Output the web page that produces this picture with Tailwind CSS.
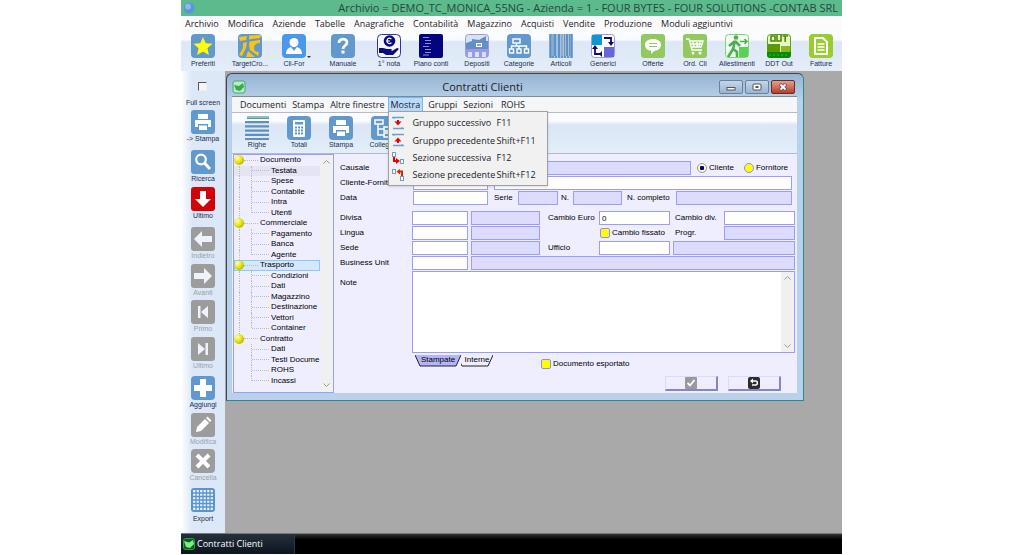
<!DOCTYPE html>
<html lang="it">
<head>
    <meta charset="UTF-8">
    <meta name="viewport" content="width=device-width, initial-scale=1.0">
    <title>Contratti Clienti</title>
    <script src="https://cdn.jsdelivr.net/npm/@tailwindcss/browser@4"></script>
</head>

<body class="bg-white">
<div class="flex min-h-screen flex-col pr-[182px] pb-px pl-[181px] font-['Open_Sans','Noto_Sans',sans-serif] text-[9px] leading-3 text-[#1b1b2b]">

    <!-- Title bar -->
    <header class="flex h-4 items-center bg-[#5cba8c] pr-1 pl-0.5">
        <svg class="size-3 shrink-0" viewBox="0 0 12 12"><circle cx="6" cy="6" r="5.500" fill="#5b93dc"/><circle cx="5" cy="4.500" r="3" fill="#8db8ee"/></svg>
        <h1 class="flex-1 text-right text-[11px] leading-4 whitespace-nowrap text-[#24493c]">Archivio = DEMO_TC_MONICA_55NG - Azienda = 1 - FOUR BYTES - FOUR SOLUTIONS -CONTAB SRL</h1>
    </header>

    <!-- Main menu -->
    <nav class="flex h-4 items-center gap-[9px] bg-[#fbfbfb] pl-1 whitespace-nowrap">
        <a href="#">Archivio</a>
        <a href="#">Modifica</a>
        <a href="#">Aziende</a>
        <a href="#">Tabelle</a>
        <a href="#">Anagrafiche</a>
        <a href="#">Contabilità</a>
        <a href="#">Magazzino</a>
        <a href="#">Acquisti</a>
        <a href="#">Vendite</a>
        <a href="#">Produzione</a>
        <a href="#">Moduli aggiuntivi</a>
    </nav>

    <!-- Main toolbar -->
    <div class="flex h-[39px] bg-linear-to-b from-[#fafcff] from-20% via-[#dde7f5] via-25% to-[#e3eefa] pt-0.5 pl-px font-['Liberation_Sans',sans-serif] text-[7px] leading-[11px] whitespace-nowrap text-[#1c2c50]">
        <button class="mr-[5px] flex w-[42px] flex-col items-center">
            <svg class="size-6" viewBox="0 0 24 24"><rect width="24" height="24" rx="4" fill="#6199cf"/><path d="M12 3l2.700 6.200 6.800.6-5.100 4.500 1.500 6.700-5.900-3.500L6.100 21l1.500-6.700-5.100-4.500 6.800-.6z" fill="#ff0"/></svg>
            Preferiti
        </button>
        <button class="mr-0.5 flex w-[42px] flex-col items-center">
            <svg class="size-6" viewBox="0 0 24 24"><rect width="24" height="24" rx="4" fill="#6199cf"/><path d="M1 3l8-1-1 4-6 1zM11 1.500L23 1l-1 3-11 1.500zM5 9l4-1-1 6-4 8-3-1 4-7zM11.500 7.500L22 6v3c-4 0-6 2-6 5s2 4 5 4l-1 4-8-6c-1-3-1-5-.5-8.500zM10 17l7 6H8z" fill="#fcc40c"/></svg>
            TargetCro...
        </button>
        <button class="relative mr-[7px] flex w-[42px] flex-col items-center">
            <svg class="size-6" viewBox="0 0 24 24"><rect width="24" height="24" rx="4" fill="#4a97ee"/><circle cx="12" cy="8.500" r="4.500" fill="#fff"/><path d="M4 20c0-4 2-6 5-7l3 4 3-4c3 1 5 3 5 7z" fill="#fff"/></svg>
            Cli-For
            <svg class="absolute top-[21px] right-1 h-1 w-1" viewBox="0 0 4 4"><path d="M0 1h4L2 3z" fill="#234"/></svg>
        </button>
        <button class="mr-1 flex w-[42px] flex-col items-center">
            <svg class="size-6" viewBox="0 0 24 24"><rect width="24" height="24" rx="4" fill="#6199cf"/><path d="M8 9c0-5 8-5 8-.5 0 3-4 3-4 6.500" fill="none" stroke="#fff" stroke-width="2.800"/><rect x="10.500" y="16.500" width="3" height="3" fill="#fff"/></svg>
            Manuale
        </button>
        <button class="flex w-[42px] flex-col items-center">
            <svg class="size-6" viewBox="0 0 24 24"><rect x=".5" y=".5" width="23" height="23" rx="4" fill="#f4f6ff" stroke="#34349a"/><circle cx="12.500" cy="7" r="5.800" fill="#0a0a80"/><path d="M14.500 5c-3-2-4.500 0-4.500 2s2 3.500 4.500 1.800M9 7h4" fill="none" stroke="#fff" stroke-width="1.200"/><path d="M2 14h4l4 1h4c1 0 1 2 0 2h-4 5l5-3c2 0 2 1 1 2l-5 5H9l-3-2H2z" fill="#0a0a80"/></svg>
            1° nota
        </button>
        <button class="mr-1 flex w-[42px] flex-col items-center">
            <svg class="size-6" viewBox="0 0 24 24"><rect width="24" height="24" rx="2" fill="#04047e"/><path d="M4 3.500h6M6 6.500h6M6 9.500h6M4 12.500h6M6 15.500h6M6 18.500h6M4 21h6" stroke="#8f8fce" stroke-width="1.200"/></svg>
            Piano conti
        </button>
        <button class="flex w-[42px] flex-col items-center">
            <svg class="size-6" viewBox="0 0 24 24"><rect x=".5" y=".5" width="23" height="23" rx="3" fill="#d8e2f8" stroke="#9a9ae4"/><path d="M1 9l6-2V5l7 1 7-4v5h2v8H1z" fill="#6090c6"/><rect x="1" y="15" width="22" height="8" fill="#9a9ae8"/><path d="M3 23v-5h4v5zM10 23v-5h4v5zM17 23v-5h4v5z" fill="#d8e2f8"/><rect x="11.500" y="9.500" width="5" height="3" fill="#9a9ae8" stroke="#fff"/></svg>
            Depositi
        </button>
        <button class="flex w-[42px] flex-col items-center">
            <svg class="size-6" viewBox="0 0 24 24"><rect width="24" height="24" rx="4" fill="#6199cf"/><g fill="none" stroke="#fff" stroke-width="1.400"><rect x="6" y="5" width="7" height="4"/><path d="M9.500 9v3M4.500 15v-3h15v3M12 12v3"/><rect x="2.500" y="15" width="4" height="4"/><rect x="10" y="15" width="4" height="4"/><rect x="17.500" y="15" width="4" height="4"/></g></svg>
            Categorie
        </button>
        <button class="flex w-[42px] flex-col items-center">
            <svg class="size-6" viewBox="0 0 24 24"><rect width="24" height="24" rx="1" fill="#a9c6e6"/><path d="M1.500 0v24M6 0v22M10 0v22M18 0v22M22.500 0v24" stroke="#5a92cc" stroke-width="2.200"/><path d="M4 0v22M13 0v22M15.500 0v22M20.500 0v22" stroke="#7e8fa2" stroke-width="1"/><path d="M3 23h18" stroke="#6199cf" stroke-width="2" stroke-dasharray="2 1"/></svg>
            Articoli
        </button>
        <button class="mr-2 flex w-[42px] flex-col items-center">
            <svg class="size-6" viewBox="0 0 24 24"><rect x=".5" y=".5" width="23" height="23" rx="3" fill="#fff" stroke="#9a9ae4"/><rect x="1" y="1" width="10" height="10" fill="#0c98d0"/><rect x="13" y="13" width="10" height="10" fill="#6666d4"/><path d="M13 4h7v6M11 20H4v-6" fill="none" stroke="#0a0a70" stroke-width="1.800"/><path d="M17 8h6l-3 4zM1 15h6l-3-4zM11 17v6l-3-3z" fill="#0a0a70"/></svg>
            Generici
        </button>
        <button class="flex w-[42px] flex-col items-center">
            <svg class="size-6" viewBox="0 0 24 24"><rect width="24" height="24" rx="3" fill="#92c85e"/><path d="M12 5c5 0 8 2.500 8 6s-3 5.500-6 5.500L10 20v-3.500c-4 0-6-2.500-6-5.500 0-3.500 3-6 8-6z" fill="#fff"/><path d="M8 9.500h8M8 12.500h8" stroke="#92c85e" stroke-width="1.200"/></svg>
            Offerte
        </button>
        <button class="flex w-[42px] flex-col items-center">
            <svg class="size-6" viewBox="0 0 24 24"><rect width="24" height="24" rx="3" fill="#92c85e"/><g fill="none" stroke="#fff" stroke-width="1.400"><path d="M3 5h3l3 11h10M7 7h13l-2 6H9M10 8l1 5M14 8v5M17 8l-1 5M8 10h11"/></g><circle cx="10" cy="19" r="1.500" fill="#fff"/><circle cx="17" cy="19" r="1.500" fill="#fff"/></svg>
            Ord. Cli
        </button>
        <button class="flex w-[42px] flex-col items-center">
            <svg class="size-6" viewBox="0 0 24 24"><rect x=".5" y=".5" width="23" height="23" rx="3" fill="#f2fff0" stroke="#7cd66e"/><circle cx="11" cy="3.500" r="2.300" fill="#4cae50"/><path d="M10 7l-2 8 4 3v5M8 15l-5 8M10 7l5 5M10 7l-6 5" fill="none" stroke="#4cae50" stroke-width="2.600"/><rect x="14" y="13" width="9" height="10" fill="#5cd058"/><path d="M15 7.500h7M19.500 5l2.500 2.500-2.500 2.500" fill="none" stroke="#4cae50" stroke-width="1.500"/></svg>
            Allestimenti
        </button>
        <button class="flex w-[42px] flex-col items-center">
            <svg class="size-6" viewBox="0 0 24 24"><rect x=".5" y=".5" width="23" height="23" rx="3" fill="#eaf6c8" stroke="#5ea010"/><path d="M4 2h4v5H4zM10 1v6h4V1M15.500 2H21M18.200 2v6" fill="none" stroke="#4a8c00" stroke-width="1.600"/><rect x="1" y="10" width="12" height="9" fill="#5c9a00"/><rect x="14" y="12" width="9" height="7" fill="#86ba20"/><path d="M0 18h24v3a3 3 0 0 1-3 3H3a3 3 0 0 1-3-3z" fill="#078a07"/><path d="M2 21h20" stroke="#3cb83c" stroke-dasharray="2 2"/></svg>
            DDT Out
        </button>
        <button class="flex w-[42px] flex-col items-center">
            <svg class="size-6" viewBox="0 0 24 24"><rect width="24" height="24" rx="4" fill="#9acb31"/><path d="M6 4h8l4 4v12H6z" fill="none" stroke="#fff" stroke-width="2"/><path d="M8.500 10h7M8.500 13h7M8.500 16h7" stroke="#fff" stroke-width="1.400"/></svg>
            Fatture
        </button>
    </div>

    <div class="flex flex-1">

        <!-- Side toolbar -->
        <aside class="flex w-11 shrink-0 flex-col items-center bg-linear-to-r from-white to-[#dce8f8] to-25% pt-[11px] font-['Liberation_Sans',sans-serif] text-[7px] leading-[9px] whitespace-nowrap text-[#1c2c50]">
            <label class="mb-[3px] flex flex-col items-center gap-[7px]">
                <input type="checkbox" class="size-[9px] appearance-none border border-[#eee] border-t-[#555] border-l-[#555] bg-[#f4f4f4]">
                Full screen
            </label>
            <button class="mb-[7px] flex flex-col items-center">
                <svg class="size-6" viewBox="0 0 24 24"><rect width="24" height="24" rx="3" fill="#6199cf"/><path d="M7 4h10v5H7zM4 10h16v7h-3v-3H7v3H4zM8 15.500h8V20H8z" fill="#fff"/></svg>
                -&gt; Stampa
            </button>
            <button class="mb-1 flex flex-col items-center">
                <svg class="size-6" viewBox="0 0 24 24"><rect width="24" height="24" rx="3" fill="#6199cf"/><circle cx="10" cy="9.500" r="4.800" fill="none" stroke="#fff" stroke-width="2.200"/><path d="M13.500 13l5.500 6" stroke="#fff" stroke-width="3"/></svg>
                Ricerca
            </button>
            <button class="mb-[7px] flex flex-col items-center">
                <svg class="size-6" viewBox="0 0 24 24"><rect width="24" height="24" rx="3" fill="#d20408"/><path d="M9 4h6v8h5l-8 8-8-8h5z" fill="#fff"/></svg>
                Ultimo
            </button>
            <button class="mb-1 flex flex-col items-center text-[#9a9fa8]" disabled>
                <svg class="size-6" viewBox="0 0 24 24"><rect width="24" height="24" rx="3" fill="#9c9c9c"/><path d="M3 12l8-8v5h10v6H11v5z" fill="#eef2fa"/></svg>
                Indietro
            </button>
            <button class="mb-[3px] flex flex-col items-center text-[#9a9fa8]" disabled>
                <svg class="size-6" viewBox="0 0 24 24"><rect width="24" height="24" rx="3" fill="#9c9c9c"/><path d="M21 12l-8-8v5H3v6h10v5z" fill="#eef2fa"/></svg>
                Avanti
            </button>
            <button class="mb-1 flex flex-col items-center text-[#9a9fa8]" disabled>
                <svg class="size-6" viewBox="0 0 24 24"><rect width="24" height="24" rx="3" fill="#9c9c9c"/><path d="M7 6h2.500v12H7zM17 6v12l-7-6z" fill="#eef2fa"/></svg>
                Primo
            </button>
            <button class="mb-1.5 flex flex-col items-center text-[#9a9fa8]" disabled>
                <svg class="size-6" viewBox="0 0 24 24"><rect width="24" height="24" rx="3" fill="#9c9c9c"/><path d="M14.500 6H17v12h-2.500zM7 6v12l7-6z" fill="#eef2fa"/></svg>
                Ultimo
            </button>
            <button class="mb-1 flex flex-col items-center">
                <svg class="size-6" viewBox="0 0 24 24"><rect width="24" height="24" rx="4" fill="#6199cf"/><path d="M9 3h6v6h6v6h-6v6H9v-6H3V9h6z" fill="#fff"/></svg>
                Aggiungi
            </button>
            <button class="mb-[3px] flex flex-col items-center text-[#9a9fa8]" disabled>
                <svg class="size-6" viewBox="0 0 24 24"><rect width="24" height="24" rx="3" fill="#9c9c9c"/><path d="M5 19l1-5 8-8 4 4-8 8zM15 5l1.500-1.500 4 4L19 9z" fill="#fff"/></svg>
                Modifica
            </button>
            <button class="mb-1.5 flex flex-col items-center text-[#9a9fa8]" disabled>
                <svg class="size-6" viewBox="0 0 24 24"><rect width="24" height="24" rx="4" fill="#9c9c9c"/><path d="M6 6l12 12M18 6L6 18" stroke="#fff" stroke-width="4"/></svg>
                Cancella
            </button>
            <button class="flex flex-col items-center gap-0.5">
                <svg class="size-6" viewBox="0 0 24 24"><rect x="1" y="1" width="22" height="22" rx="2" fill="#eaf3fc" stroke="#5b95d0" stroke-width="2"/><path d="M5 1v22M8.500 1v22M12 1v22M15.500 1v22M19 1v22M1 5h22M1 8.500h22M1 12h22M1 15.500h22M1 19h22" stroke="#5b95d0" stroke-width="1.300"/></svg>
                Export
            </button>
        </aside>

        <!-- Workspace -->
        <main class="min-w-0 flex-1 bg-[#a9a9a9] pt-0.5 pr-[38px] pl-px">
            <section class="rounded-t-md border border-[#3c4650] border-r-[#1d8d9c] border-b-[#1d8d9c] bg-linear-to-b from-[#98b4d2] to-[#b9d1ea] to-8% pr-1.5 pb-[7px] pl-[5px]">

                <div class="flex h-[22px] items-center pt-1">
                    <svg class="size-3.5" viewBox="0 0 14 14"><rect x="1" y="1" width="12" height="12" rx="2" fill="#bfe8c8" stroke="#3fae62"/><path d="M2 5l5 1 4-3 1 4-4 4-4-1z" fill="#2fb04c"/></svg>
                    <h2 class="flex-1 text-center text-[11px] leading-4">Contratti Clienti</h2>
                    <div class="flex gap-0.5 pr-0.5">
                        <button class="flex h-3.5 w-6 items-center justify-center rounded-xs border border-[#6c8099] bg-linear-to-b from-[#c4d6ea] to-[#9ab4d2]" aria-label="Riduci a icona"><svg class="h-2 w-2.5" viewBox="0 0 10 8"><rect x="1" y="4.500" width="8" height="2.500" fill="#fff" stroke="#555"/></svg></button>
                        <button class="flex h-3.5 w-6 items-center justify-center rounded-xs border border-[#6c8099] bg-linear-to-b from-[#c4d6ea] to-[#9ab4d2]" aria-label="Ingrandisci"><svg class="h-2 w-2.5" viewBox="0 0 10 8"><rect x="1" y="1" width="8" height="6" rx="1" fill="#fff" stroke="#555"/><rect x="3.500" y="3" width="3" height="2" fill="#555"/></svg></button>
                        <button class="flex h-3.5 w-6 items-center justify-center rounded-xs border border-[#6d2a22] bg-linear-to-b from-[#e0a090] to-[#bc3a20]" aria-label="Chiudi"><svg class="h-2 w-2.5" viewBox="0 0 10 8"><path d="M2 1l6 6M8 1L2 7" stroke="#555" stroke-width="3.200"/><path d="M2.500 1.500l5 5M7.500 1.500l-5 5" stroke="#fff" stroke-width="1.800"/></svg></button>
                    </div>
                </div>

                <!-- Window menu -->
                <nav class="flex h-4 items-stretch border-t border-[#7d8a98] bg-[#f5f6f8] pl-[5px] leading-[15px] whitespace-nowrap">
                    <a href="#" class="px-[3px]">Documenti</a>
                    <a href="#" class="px-[3px]">Stampa</a>
                    <a href="#" class="px-[3px]">Altre finestre</a>
                    <div class="relative">
                        <a href="#" class="block border border-[#7eb4ea] bg-[#b9dbfb] px-0.5 leading-[13px]">Mostra</a>
                        <ul class="absolute top-[14px] left-0 z-10 w-40 border border-[#a0a0a0] bg-[#f1f1f1] py-0.5 shadow-sm">
                            <li><button class="flex h-[17px] w-full items-center pl-0.5 text-left">
                                <svg class="mr-2 size-3.5" viewBox="0 0 14 14"><path d="M1 1.500h12M2 12.500h11" stroke="#6fa0c8" stroke-width="1.400"/><path d="M3 1v2M11 11v2" stroke="#6fa0c8"/><path d="M6 4h2v1.500h2.500L7 9.500 3.500 5.500H6z" fill="#e80000"/></svg>
                                <span class="w-[84px]">Gruppo successivo</span><span>F11</span>
                            </button></li>
                            <li><button class="flex h-[18px] w-full items-center pl-0.5 text-left">
                                <svg class="mr-2 size-3.5" viewBox="0 0 14 14"><path d="M1 1.500h12M2 12.500h11" stroke="#6fa0c8" stroke-width="1.400"/><path d="M3 1v2M11 11v2" stroke="#6fa0c8"/><path d="M6 10h2V8.500h2.500L7 4.500 3.500 8.500H6z" fill="#e80000"/></svg>
                                <span class="w-[84px]">Gruppo precedente</span><span>Shift+F11</span>
                            </button></li>
                            <li><button class="flex h-[17px] w-full items-center pl-0.5 text-left">
                                <svg class="mr-2 size-3.5" viewBox="0 0 14 14"><rect x="1.500" y="1.500" width="3" height="4" fill="#fff" stroke="#6fa0c8"/><rect x="9.500" y="8.500" width="3" height="4" fill="#fff" stroke="#6fa0c8"/><path d="M3 6v4h3" fill="none" stroke="#e00" stroke-width="2"/><path d="M5 7l4 3-4 3z" fill="#e00"/></svg>
                                <span class="w-[84px]">Sezione successiva</span><span>F12</span>
                            </button></li>
                            <li><button class="flex h-[17px] w-full items-center pl-0.5 text-left">
                                <svg class="mr-2 size-3.5" viewBox="0 0 14 14"><rect x="1.500" y="1.500" width="3" height="4" fill="#fff" stroke="#6fa0c8"/><rect x="9.500" y="8.500" width="3" height="4" fill="#fff" stroke="#6fa0c8"/><path d="M11 8V3.500H8" fill="none" stroke="#d02a00" stroke-width="2"/><path d="M9 1L5.500 3.500 9 6.500z" fill="#d02a00"/></svg>
                                <span class="w-[84px]">Sezione precedente</span><span>Shift+F12</span>
                            </button></li>
                        </ul>
                    </div>
                    <a href="#" class="pr-[3px] pl-[5px]">Gruppi</a>
                    <a href="#" class="px-[3px]">Sezioni</a>
                    <a href="#" class="px-[5px]">ROHS</a>
                </nav>

                <!-- Window toolbar -->
                <div class="flex h-[41px] border-t border-[#b5bac4] bg-linear-to-b from-[#fafcff] from-20% via-[#dce6f5] via-30% to-[#e2eefa] pt-[3px] pl-1 font-['Liberation_Sans',sans-serif] text-[7px] leading-[10px] text-[#1c2c50]">
                    <button class="flex w-[42px] flex-col items-center">
                        <svg class="size-6" viewBox="0 0 24 24"><path d="M2 2h22M0 6.200h24M0 10.400h24M0 14.600h24M0 18.800h24M0 23h24" stroke="#5f8fc0" stroke-width="2.200"/><path d="M2 1h22" stroke="#8cc4b8" stroke-width="2"/></svg>
                        Righe
                    </button>
                    <button class="flex w-[42px] flex-col items-center">
                        <svg class="size-6" viewBox="0 0 24 24"><rect width="24" height="24" rx="4" fill="#6199cf"/><rect x="6" y="4" width="12" height="17" rx="1" fill="#fff"/><rect x="8" y="6" width="8" height="2.500" fill="#6199cf"/><path d="M8 11.500h8M8 14.500h8M8 17.500h8" stroke="#6199cf" stroke-width="1.800" stroke-dasharray="2 1"/></svg>
                        Totali
                    </button>
                    <button class="flex w-[42px] flex-col items-center">
                        <svg class="size-6" viewBox="0 0 24 24"><rect width="24" height="24" rx="4" fill="#6199cf"/><path d="M7 4h10v5H7zM4 10h16v7h-3v-3H7v3H4zM8 15.500h8V20H8z" fill="#fff"/></svg>
                        Stampa
                    </button>
                    <button class="flex w-[42px] flex-col items-center">
                        <svg class="size-6" viewBox="0 0 24 24"><rect width="24" height="24" rx="4" fill="#6199cf"/><g fill="none" stroke="#fff" stroke-width="1.500"><rect x="4" y="4" width="8" height="4"/><path d="M7 8v11h6M7 13h6"/><rect x="13" y="11" width="6" height="4"/><rect x="13" y="17" width="6" height="4"/></g></svg>
                        Collegati
                    </button>
                </div>

                <div class="flex border-t border-[#b5bac4] bg-[#efeeff] pl-px font-['Liberation_Sans',sans-serif] text-[8px] leading-[10px] text-black">

                    <!-- Section tree -->
                    <div class="flex h-[239px] w-[101px] shrink-0 border border-[#9c9cff]">
                        <ul id="tree" class="grid h-[231px] min-w-0 flex-1 auto-rows-fr whitespace-nowrap"></ul>
                        <div class="flex w-[13px] flex-col items-center justify-between bg-[#f0f0f0] py-[5px]">
                            <svg class="h-1 w-[7px]" viewBox="0 0 7 4"><path d="M.5 3.500l3-3 3 3" fill="none" stroke="#999"/></svg>
                            <svg class="h-1 w-[7px]" viewBox="0 0 7 4"><path d="M.5.500l3 3 3-3" fill="none" stroke="#999"/></svg>
                        </div>
                    </div>

                    <!-- Contract form -->
                    <form class="flex min-w-0 flex-1 flex-col pt-[7px] pr-0.5 pl-1.5 whitespace-nowrap">
                        <div class="flex flex-col gap-px pr-[3px]">
                            <div class="flex h-3.5 items-center">
                                <label for="causale" class="w-[73px]">Causale</label>
                                <input id="causale" class="h-3.5 min-w-0 flex-1 border border-[#9c9cff] bg-[#dcdcff]">
                                <label class="ml-1.5 flex items-center gap-0.5"><input type="radio" name="tipo" checked class="size-[10px] appearance-none rounded-full border border-[#8c8cff] bg-[#ffff80] checked:bg-[radial-gradient(circle,#000080_35%,#ffffa0_45%)]">Cliente</label>
                                <label class="mr-1 ml-2.5 flex items-center gap-0.5"><input type="radio" name="tipo" class="size-[10px] appearance-none rounded-full border border-[#8c8cff] bg-[#ffff00] checked:bg-[#000080]">Fornitore</label>
                            </div>
                            <div class="flex h-3.5 items-center">
                                <label for="cliente" class="w-[73px]">Cliente-Fornitore</label>
                                <input id="cliente" class="mr-1.5 h-3.5 w-[75px] border border-[#9c9cff] bg-white">
                                <input aria-label="Descrizione cliente" class="h-3.5 min-w-0 flex-1 border border-[#9c9cff] bg-white">
                            </div>
                            <div class="flex h-3.5 items-center">
                                <label for="data" class="w-[73px]">Data</label>
                                <input id="data" class="mr-1.5 h-3.5 w-[75px] border border-[#9c9cff] bg-white">
                                <label for="serie" class="w-6">Serie</label>
                                <input id="serie" class="h-3.5 w-10 border border-[#9c9cff] bg-[#dcdcff]">
                                <label for="numero" class="w-[15px] pl-[3px]">N.</label>
                                <input id="numero" class="h-3.5 w-[49px] border border-[#9c9cff] bg-[#dcdcff]">
                                <label for="completo" class="w-[54px] pl-[5px]">N. completo</label>
                                <input id="completo" class="h-3.5 min-w-0 flex-1 border border-[#9c9cff] bg-[#dcdcff]">
                            </div>
                        </div>

                        <div class="mt-1.5 flex flex-col gap-px">
                            <div class="flex h-3.5 items-center">
                                <label for="divisa" class="w-[72px]">Divisa</label>
                                <input id="divisa" class="mr-[3px] h-3.5 w-14 border border-[#9c9cff] bg-white">
                                <input aria-label="Descrizione divisa" class="h-3.5 w-[69px] border border-[#9c9cff] bg-[#dcdcff]">
                                <label for="euro" class="w-[59px] pl-2">Cambio Euro</label>
                                <input id="euro" value="0" class="h-3.5 w-[71px] border border-[#9c9cff] bg-white px-0.5">
                                <label for="cambio" class="w-[54px] pl-[5px]">Cambio div.</label>
                                <input id="cambio" class="h-3.5 min-w-0 flex-1 border border-[#9c9cff] bg-white">
                            </div>
                            <div class="flex h-3.5 items-center">
                                <label for="lingua" class="w-[72px]">Lingua</label>
                                <input id="lingua" class="mr-[3px] h-3.5 w-14 border border-[#9c9cff] bg-white">
                                <input aria-label="Descrizione lingua" class="h-3.5 w-[69px] border border-[#9c9cff] bg-[#dcdcff]">
                                <label class="ml-[60px] flex w-[65px] items-center gap-0.5 overflow-hidden"><input type="checkbox" class="size-[10px] shrink-0 appearance-none rounded-xs border border-[#8c8cff] bg-[#ffff00] checked:bg-[#000080]">Cambio fissato</label>
                                <label for="progr" class="ml-[5px] w-[54px] pl-[5px]">Progr.</label>
                                <input id="progr" class="h-3.5 min-w-0 flex-1 border border-[#9c9cff] bg-[#dcdcff]">
                            </div>
                            <div class="flex h-3.5 items-center">
                                <label for="sede" class="w-[72px]">Sede</label>
                                <input id="sede" class="mr-[3px] h-3.5 w-14 border border-[#9c9cff] bg-white">
                                <input aria-label="Descrizione sede" class="h-3.5 w-[69px] border border-[#9c9cff] bg-[#dcdcff]">
                                <label for="ufficio" class="w-[59px] pl-2">Ufficio</label>
                                <input id="ufficio" class="mr-[3px] h-3.5 w-[71px] border border-[#9c9cff] bg-white">
                                <input aria-label="Descrizione ufficio" class="h-3.5 min-w-0 flex-1 border border-[#9c9cff] bg-[#dcdcff]">
                            </div>
                            <div class="flex h-3.5 items-center">
                                <label for="unit" class="w-[72px]">Business Unit</label>
                                <input id="unit" class="mr-[3px] h-3.5 w-14 border border-[#9c9cff] bg-white">
                                <input aria-label="Descrizione business unit" class="h-3.5 min-w-0 flex-1 border border-[#9c9cff] bg-[#dcdcff]">
                            </div>
                            <div class="flex">
                                <label for="note" class="w-[72px] pt-[7px]">Note</label>
                                <div class="flex h-[82px] min-w-0 flex-1 border border-[#9c9cff] bg-white">
                                    <textarea id="note" class="min-w-0 flex-1 resize-none"></textarea>
                                    <div class="flex w-[13px] flex-col items-center justify-between bg-[#f0f0f0] py-1">
                                        <svg class="h-1 w-[7px]" viewBox="0 0 7 4"><path d="M.5 3.500l3-3 3 3" fill="none" stroke="#999"/></svg>
                                        <svg class="h-1 w-[7px]" viewBox="0 0 7 4"><path d="M.5.500l3 3 3-3" fill="none" stroke="#999"/></svg>
                                    </div>
                                </div>
                            </div>
                        </div>

                        <div class="flex items-start pt-px pl-[75px]">
                            <button type="button" class="relative h-[13px] w-[46px] pb-0.5 text-center">
                                <svg class="absolute inset-0 h-[13px] w-[46px]" viewBox="0 0 46 13"><path d="M0 1l5 11h36l5-11z" fill="#b4b4fa"/><path d="M0 1l5 11h36l5-11" fill="none" stroke="#222"/></svg>
                                <span class="relative">Stampate</span>
                            </button>
                            <button type="button" class="relative h-[13px] w-8 pb-0.5 text-center">
                                <svg class="absolute inset-0 h-[13px] w-8" viewBox="0 0 32 13"><path d="M-2 6l3 6h26l5-11" fill="none" stroke="#222"/></svg>
                                <span class="relative">Interne</span>
                            </button>
                            <label class="mt-[5px] ml-12 flex items-center gap-0.5"><input type="checkbox" class="size-[10px] appearance-none rounded-xs border border-[#8c8cff] bg-[#ffff00] checked:bg-[#000080]">Documento esportato</label>
                        </div>

                        <div class="mt-[7px] flex justify-end gap-2.5 pr-3.5">
                            <button type="button" class="flex h-[15px] w-[53px] items-center justify-center border border-r-2 border-b-2 border-[#dadaff] border-r-[#8484d0] border-b-[#8484d0]" aria-label="Conferma">
                                <svg class="size-3" viewBox="0 0 12 12"><rect width="12" height="12" rx="1" fill="#9a9a9a"/><path d="M2.500 6L5 8.500 9.500 3" fill="none" stroke="#fff" stroke-width="1.800"/></svg>
                            </button>
                            <button type="button" class="flex h-[15px] w-[53px] items-center justify-center border border-r-2 border-b-2 border-[#dadaff] border-r-[#8484d0] border-b-[#8484d0]" aria-label="Annulla">
                                <svg class="size-3" viewBox="0 0 12 12"><rect width="12" height="12" rx="2" fill="#2c2c2c"/><path d="M4 4h3.500c2.500 0 2.500 4 0 4H4" fill="none" stroke="#fff" stroke-width="1.500"/><path d="M5 1.500v5L2 4z" fill="#fff"/></svg>
                            </button>
                        </div>
                    </form>
                </div>
            </section>
        </main>
    </div>

    <!-- Taskbar -->
    <footer class="flex h-[21px] border-t border-[#777] bg-linear-to-b from-[#333] to-black to-40%">
        <button class="flex w-[114px] items-center gap-0.5 border-r border-[#1d3a5a] bg-linear-to-b from-[#26303a] to-[#0c1420] pl-0.5 text-[9px] whitespace-nowrap text-white">
            <svg class="size-3" viewBox="0 0 12 12"><rect x=".5" y=".5" width="11" height="11" rx="2" fill="#115a20" stroke="#22a040"/><path d="M1 3l5 1.500L10 2l1 4-4 4-4-1z" fill="#7fee80"/></svg>
            Contratti Clienti
        </button>
    </footer>
</div>

<script>
    const sections = [
        ['Documento', ['Testata', 'Spese', 'Contabile', 'Intra', 'Utenti']],
        ['Commerciale', ['Pagamento', 'Banca', 'Agente']],
        ['Trasporto', ['Condizioni', 'Dati', 'Magazzino', 'Destinazione', 'Vettori', 'Container']],
        ['Contratto', ['Dati', 'Testi Docume', 'ROHS', 'Incassi']]
    ];

    let rows = '';
    sections.forEach(([title, children], i) => {
        const open = title === 'Trasporto' ? 'bg-[#d4e8fc] outline outline-[#8cc8f4] -outline-offset-1' : '';
        const line = i < sections.length - 1 ? 'border-l border-dotted border-[#bbb]' : '';
        rows += `<li class="flex items-center ${open}">
            <span class="size-[10px] shrink-0 rounded-full bg-radial-[at_35%_30%] from-[#ffffb0] via-[#e0e000] to-[#8a8a00]"></span>
            <span class="mr-0.5 w-3.5 border-t border-dotted border-[#bbb]"></span>${title}</li>`;
        children.forEach((child, n) => {
            const current = child === 'Testata' ? 'bg-[#e4e4f2]' : '';
            const stem = n === children.length - 1 ? 'h-1/2' : 'h-full';
            rows += `<li class="flex items-center pl-[5px] ${current}">
                <span class="h-full w-3 shrink-0 ${line}"></span>
                <span class="h-full"><span class="block border-l border-dotted border-[#bbb] ${stem}"></span></span>
                <span class="mr-0.5 w-[17px] shrink-0 border-t border-dotted border-[#bbb]"></span>${child}</li>`;
        });
    });
    document.getElementById('tree').innerHTML = rows;
</script>
</body>
</html>
